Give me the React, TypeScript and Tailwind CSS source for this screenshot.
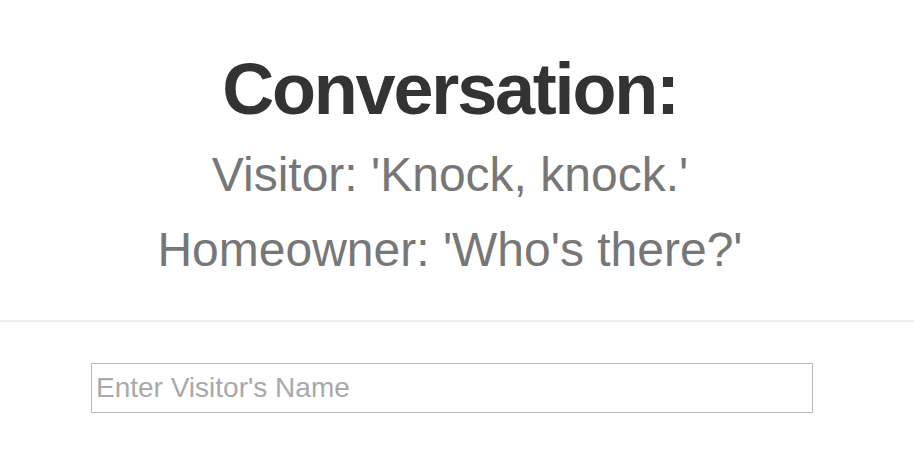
export default function App() {
  return (
    <div
      className="w-[914px] h-[470px] bg-white overflow-hidden"
      style={{ fontFamily: '"Liberation Sans", Arial, sans-serif' }}
    >
      <div className="w-[900px] text-center pt-[47px]">
        <h1 className="text-[72px] leading-[84px] font-bold tracking-[-2.2px] text-[#333333]">
          Conversation:
        </h1>
        <p className="mt-[17px] text-[48px] leading-[54px] text-[#777777]">
          Visitor: 'Knock, knock.'
        </p>
        <p className="mt-[21px] text-[48px] leading-[54px] text-[#777777]">
          Homeowner: 'Who's there?'
        </p>
      </div>
      <hr className="mt-[43px] border-0 border-t-2 border-[#eeeeee]" />
      <div className="pt-[41px] pl-[91px]">
        <input
          type="text"
          placeholder="Enter Visitor's Name"
          className="w-[722px] h-[50px] border border-[#bbbbbb] px-[4px] text-[28px] text-[#333333] placeholder:text-[#a9a9a9] outline-none"
        />
      </div>
    </div>
  )
}
